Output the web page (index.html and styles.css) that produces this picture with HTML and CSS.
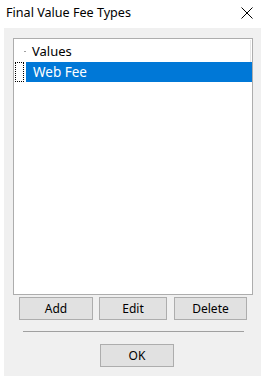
FILE: index.html
```html
<!DOCTYPE html>
<html>
<head>
<meta charset="utf-8">
<link rel="stylesheet" href="styles.css">
</head>
<body>
<div class="titlebar">
  <span class="title">Final Value Fee Types</span>
  <svg class="close" width="12" height="12" viewBox="0 0 12 12"><path d="M0.5 0.5 L11.5 11.5 M11.5 0.5 L0.5 11.5" stroke="#000" stroke-width="1"/></svg>
</div>
<div class="client">
  <div class="listbox">
    <div class="row header">
      <span class="gutter"><span class="tick"></span></span>
      <span class="label">Values</span>
    </div>
    <div class="row item">
      <span class="gutter"><span class="focus"></span></span>
      <span class="label selected">Web Fee</span>
    </div>
    <div class="scrollline"></div>
  </div>
  <div class="buttons">
    <button class="btn btn-add">Add</button>
    <button class="btn btn-edit">Edit</button>
    <button class="btn btn-delete">Delete</button>
  </div>
  <div class="separator"></div>
  <div class="okrow">
    <button class="btn btn-ok">OK</button>
  </div>
</div>
</body>
</html>
```
FILE: styles.css
```css
html, body {
  margin: 0;
  padding: 0;
  background: #ffffff;
  font-family: "Noto Sans", "Open Sans", sans-serif;
  font-size: 12px;
  color: #000;
}
.titlebar {
  height: 28px;
  display: flex;
  align-items: center;
  justify-content: space-between;
  padding: 0 8px 0 6px;
}
.title {
  font-size: 12.6px;
  line-height: 16px;
  margin-top: -2px;
}
.close {
  margin-top: -2px;
}
.client {
  margin-left: 4px;
  height: 348px;
  background: #f0f0f0;
  display: flex;
  flex-direction: column;
  padding-top: 10px;
  box-sizing: border-box;
}
.listbox {
  position: relative;
  margin-left: 9px;
  width: 240px;
  height: 257px;
  box-sizing: border-box;
  border: 1px solid #adadad;
  background: #fff;
  padding-top: 1px;
}
.row {
  display: flex;
  height: 20px;
  align-items: center;
}
.header {
  height: 22px;
}
.gutter {
  width: 11px;
  height: 100%;
  margin-left: 1px;
  position: relative;
  flex: none;
}
.tick {
  position: absolute;
  left: 9px;
  top: 11px;
  width: 2px;
  height: 1px;
  background: #a0a0a0;
}
.focus {
  position: absolute;
  left: 0;
  top: 0;
  width: 9px;
  height: 20px;
  box-sizing: border-box;
  border: 1px dotted #000;
}
.label {
  height: 100%;
  display: flex;
  align-items: center;
  padding-left: 6px;
  font-size: 13px;
  flex: 1;
}
.selected {
  background: #0078d7;
  color: #fff;
  padding-left: 7px;
  font-size: 13.5px;
}
.scrollline {
  position: absolute;
  right: 1px;
  top: 1px;
  width: 1px;
  height: 22px;
  background: #e6e6e6;
}
.buttons {
  display: flex;
  margin-top: 2px;
  padding-left: 15px;
}
.btn {
  height: 23px;
  box-sizing: border-box;
  border: 1px solid #adadad;
  background: #e1e1e1;
  font-family: "Noto Sans", "Open Sans", sans-serif;
  font-size: 12px;
  color: #000;
  padding: 0;
  margin: 0;
}
.btn-add {
  width: 74px;
}
.btn-edit {
  width: 68px;
  margin-left: 6px;
}
.btn-delete {
  width: 73px;
  margin-left: 7px;
}
.btn-ok {
  width: 74px;
}
.separator {
  margin: 11px 0 0 19px;
  width: 221px;
  height: 1px;
  background: #a0a0a0;
}
.okrow {
  display: flex;
  padding-left: 96px;
  margin-top: 12px;
}
```
